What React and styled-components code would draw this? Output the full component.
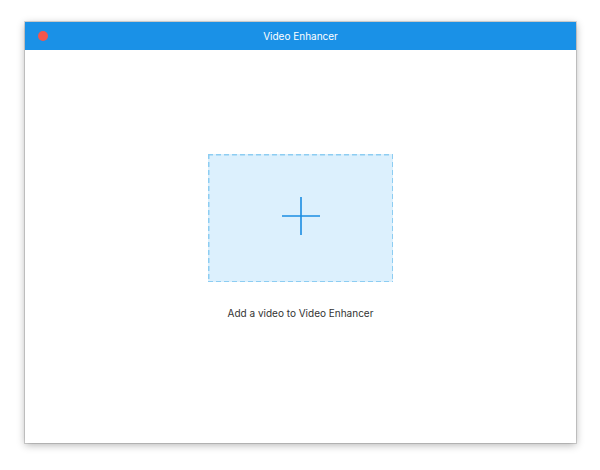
import React from "react";
import styled, { createGlobalStyle } from "styled-components";

const GlobalStyle = createGlobalStyle`
  html, body {
    margin: 0;
    padding: 0;
    background: #ffffff;
  }
  body {
    font-family: Inter, "Liberation Sans", Arial, sans-serif;
  }
`;

const Page = styled.div`
  width: 600px;
  height: 470px;
  box-sizing: border-box;
  padding: 22px 24px 27px 25px;
  display: flex;
`;

const Window = styled.div`
  flex: 1;
  display: flex;
  flex-direction: column;
  background: #ffffff;
  box-shadow: 0 0 0 1px rgba(0, 0, 0, 0.14), 0 2px 8px rgba(0, 0, 0, 0.3);
`;

const TitleBar = styled.div`
  position: relative;
  height: 28px;
  background: #1a91e7;
  display: flex;
  align-items: center;
  justify-content: center;
  color: #ffffff;
  font-size: 10px;
  line-height: 12px;
`;

const CloseDot = styled.span`
  position: absolute;
  left: 13px;
  top: 9px;
  width: 10px;
  height: 10px;
  border-radius: 50%;
  background: #f3564d;
`;

const Content = styled.div`
  flex: 1;
  display: flex;
  flex-direction: column;
  align-items: center;
  padding-top: 104px;
`;

const dash = "#8dcdf2";

const DropZone = styled.button`
  width: 185px;
  height: 128px;
  box-sizing: border-box;
  border: none;
  background-color: #dcf0fd;
  background-image:
    repeating-linear-gradient(90deg, ${dash} 0 5px, transparent 5px 8px),
    repeating-linear-gradient(90deg, ${dash} 0 5px, transparent 5px 8px),
    repeating-linear-gradient(180deg, ${dash} 0 5px, transparent 5px 8px),
    repeating-linear-gradient(180deg, ${dash} 0 5px, transparent 5px 8px);
  background-size: 100% 1.5px, 100% 1.5px, 1.5px 100%, 1.5px 100%;
  background-position: 0 0, 0 100%, 0 0, 100% 0;
  background-repeat: no-repeat;
  display: flex;
  align-items: center;
  justify-content: center;
  padding: 0 0 4px 0;
  cursor: pointer;
`;

const Caption = styled.div`
  margin-top: 25px;
  font-size: 10px;
  line-height: 12px;
  color: #333333;
`;

function PlusIcon() {
  return (
    <svg width="38" height="38" viewBox="0 0 38 38">
      <path d="M19 0 V38 M0 19 H38" stroke="#1b8de2" strokeWidth="1.6" fill="none" />
    </svg>
  );
}

export default function App() {
  return (
    <>
      <GlobalStyle />
      <Page>
        <Window>
          <TitleBar>
            <CloseDot />
            Video Enhancer
          </TitleBar>
          <Content>
            <DropZone>
              <PlusIcon />
            </DropZone>
            <Caption>Add a video to Video Enhancer</Caption>
          </Content>
        </Window>
      </Page>
    </>
  );
}
